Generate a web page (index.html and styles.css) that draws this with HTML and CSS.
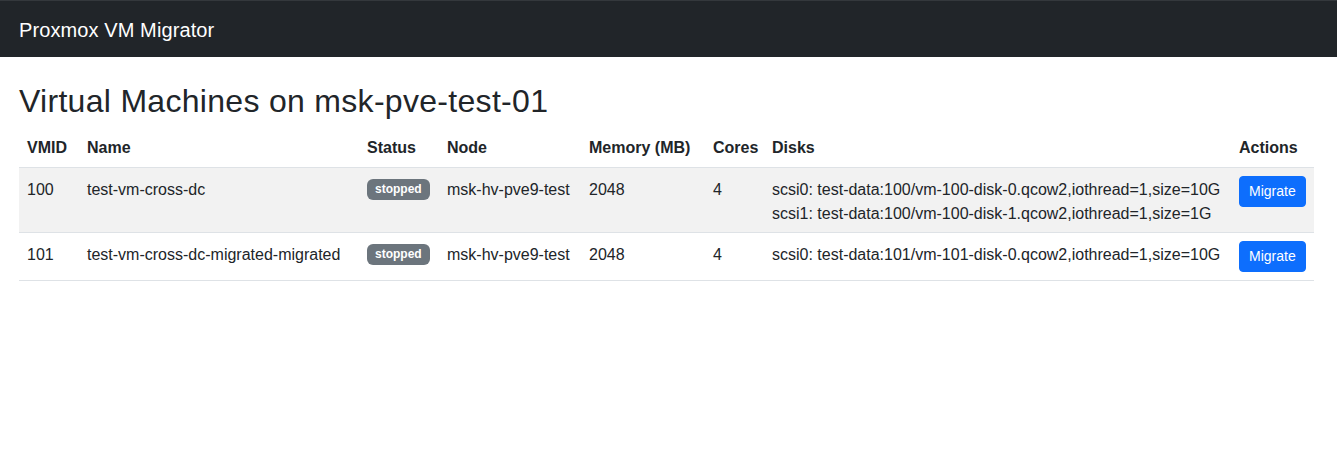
FILE: index.html
```html
<!DOCTYPE html>
<html lang="en">
<head>
<meta charset="utf-8">
<title>Proxmox VM Migrator</title>
<link rel="stylesheet" href="styles.css">
</head>
<body>
<nav class="navbar">
  <span class="brand">Proxmox VM Migrator</span>
</nav>
<main class="content">
  <h2 class="title">Virtual Machines on msk-pve-test-01</h2>
  <table class="vm-table">
    <colgroup>
      <col class="c-vmid"><col class="c-name"><col class="c-status"><col class="c-node"><col class="c-mem"><col class="c-cores"><col class="c-disks"><col class="c-actions">
    </colgroup>
    <thead>
      <tr>
        <th>VMID</th><th>Name</th><th>Status</th><th>Node</th><th>Memory (MB)</th><th>Cores</th><th>Disks</th><th>Actions</th>
      </tr>
    </thead>
    <tbody>
      <tr class="striped">
        <td>100</td>
        <td>test-vm-cross-dc</td>
        <td class="ctl"><span class="badge">stopped</span></td>
        <td>msk-hv-pve9-test</td>
        <td>2048</td>
        <td>4</td>
        <td><div>scsi0: test-data:100/vm-100-disk-0.qcow2,iothread=1,size=10G</div><div>scsi1: test-data:100/vm-100-disk-1.qcow2,iothread=1,size=1G</div></td>
        <td class="ctl"><button class="btn">Migrate</button></td>
      </tr>
      <tr>
        <td>101</td>
        <td>test-vm-cross-dc-migrated-migrated</td>
        <td class="ctl"><span class="badge">stopped</span></td>
        <td>msk-hv-pve9-test</td>
        <td>2048</td>
        <td>4</td>
        <td><div>scsi0: test-data:101/vm-101-disk-0.qcow2,iothread=1,size=10G</div></td>
        <td class="ctl"><button class="btn">Migrate</button></td>
      </tr>
    </tbody>
  </table>
</main>
</body>
</html>
```
FILE: styles.css
```css
* { box-sizing: border-box; }
html, body {
  margin: 0;
  padding: 0;
  background: #fff;
  color: #212529;
  font-family: "Liberation Sans", Arial, sans-serif;
  font-size: 16px;
  line-height: 1.5;
}
.navbar {
  height: 57px;
  background: #212529;
  border-top: 1px solid #34383c;
  display: flex;
  align-items: center;
  padding: 0 19px;
}
.brand {
  color: #fff;
  font-size: 20px;
  line-height: 30px;
  padding-top: 2px;
  letter-spacing: 0.1px;
}
.content {
  padding: 24px 23px 0 19px;
}
.title {
  margin: 0 0 8px 0;
  padding-top: 1px;
  height: 38px;
  font-size: 32px;
  font-weight: 500;
  line-height: 1.2;
  letter-spacing: 0.3px;
}
.vm-table {
  width: 100%;
  border-collapse: collapse;
  table-layout: fixed;
}
.c-vmid { width: 60px; }
.c-name { width: 280px; }
.c-status { width: 80px; }
.c-node { width: 142px; }
.c-mem { width: 124px; }
.c-cores { width: 59px; }
.c-disks { width: 467px; }
.c-actions { width: 83px; }
.vm-table th,
.vm-table td {
  padding: 10px 8px 6px;
  text-align: left;
  vertical-align: top;
  border-bottom: 1px solid #dee2e6;
  white-space: nowrap;
}
.vm-table th {
  padding: 9px 8px 7px;
  font-weight: 700;
  vertical-align: bottom;
}
.vm-table td.ctl {
  padding: 8px;
}
.vm-table tr.striped td {
  background: #f2f2f2;
}
.badge {
  display: inline-block;
  margin-top: 3px;
  background: #6c757d;
  color: #fff;
  font-size: 12px;
  font-weight: 700;
  line-height: 12px;
  padding: 4px 8px 5px;
  border-radius: 6px;
  vertical-align: top;
}
.btn {
  font-family: inherit;
  font-size: 14px;
  line-height: 21px;
  color: #fff;
  background: #0d6efd;
  border: 1px solid #0d6efd;
  border-radius: 4px;
  padding: 4px 9px;
  cursor: pointer;
}
```
